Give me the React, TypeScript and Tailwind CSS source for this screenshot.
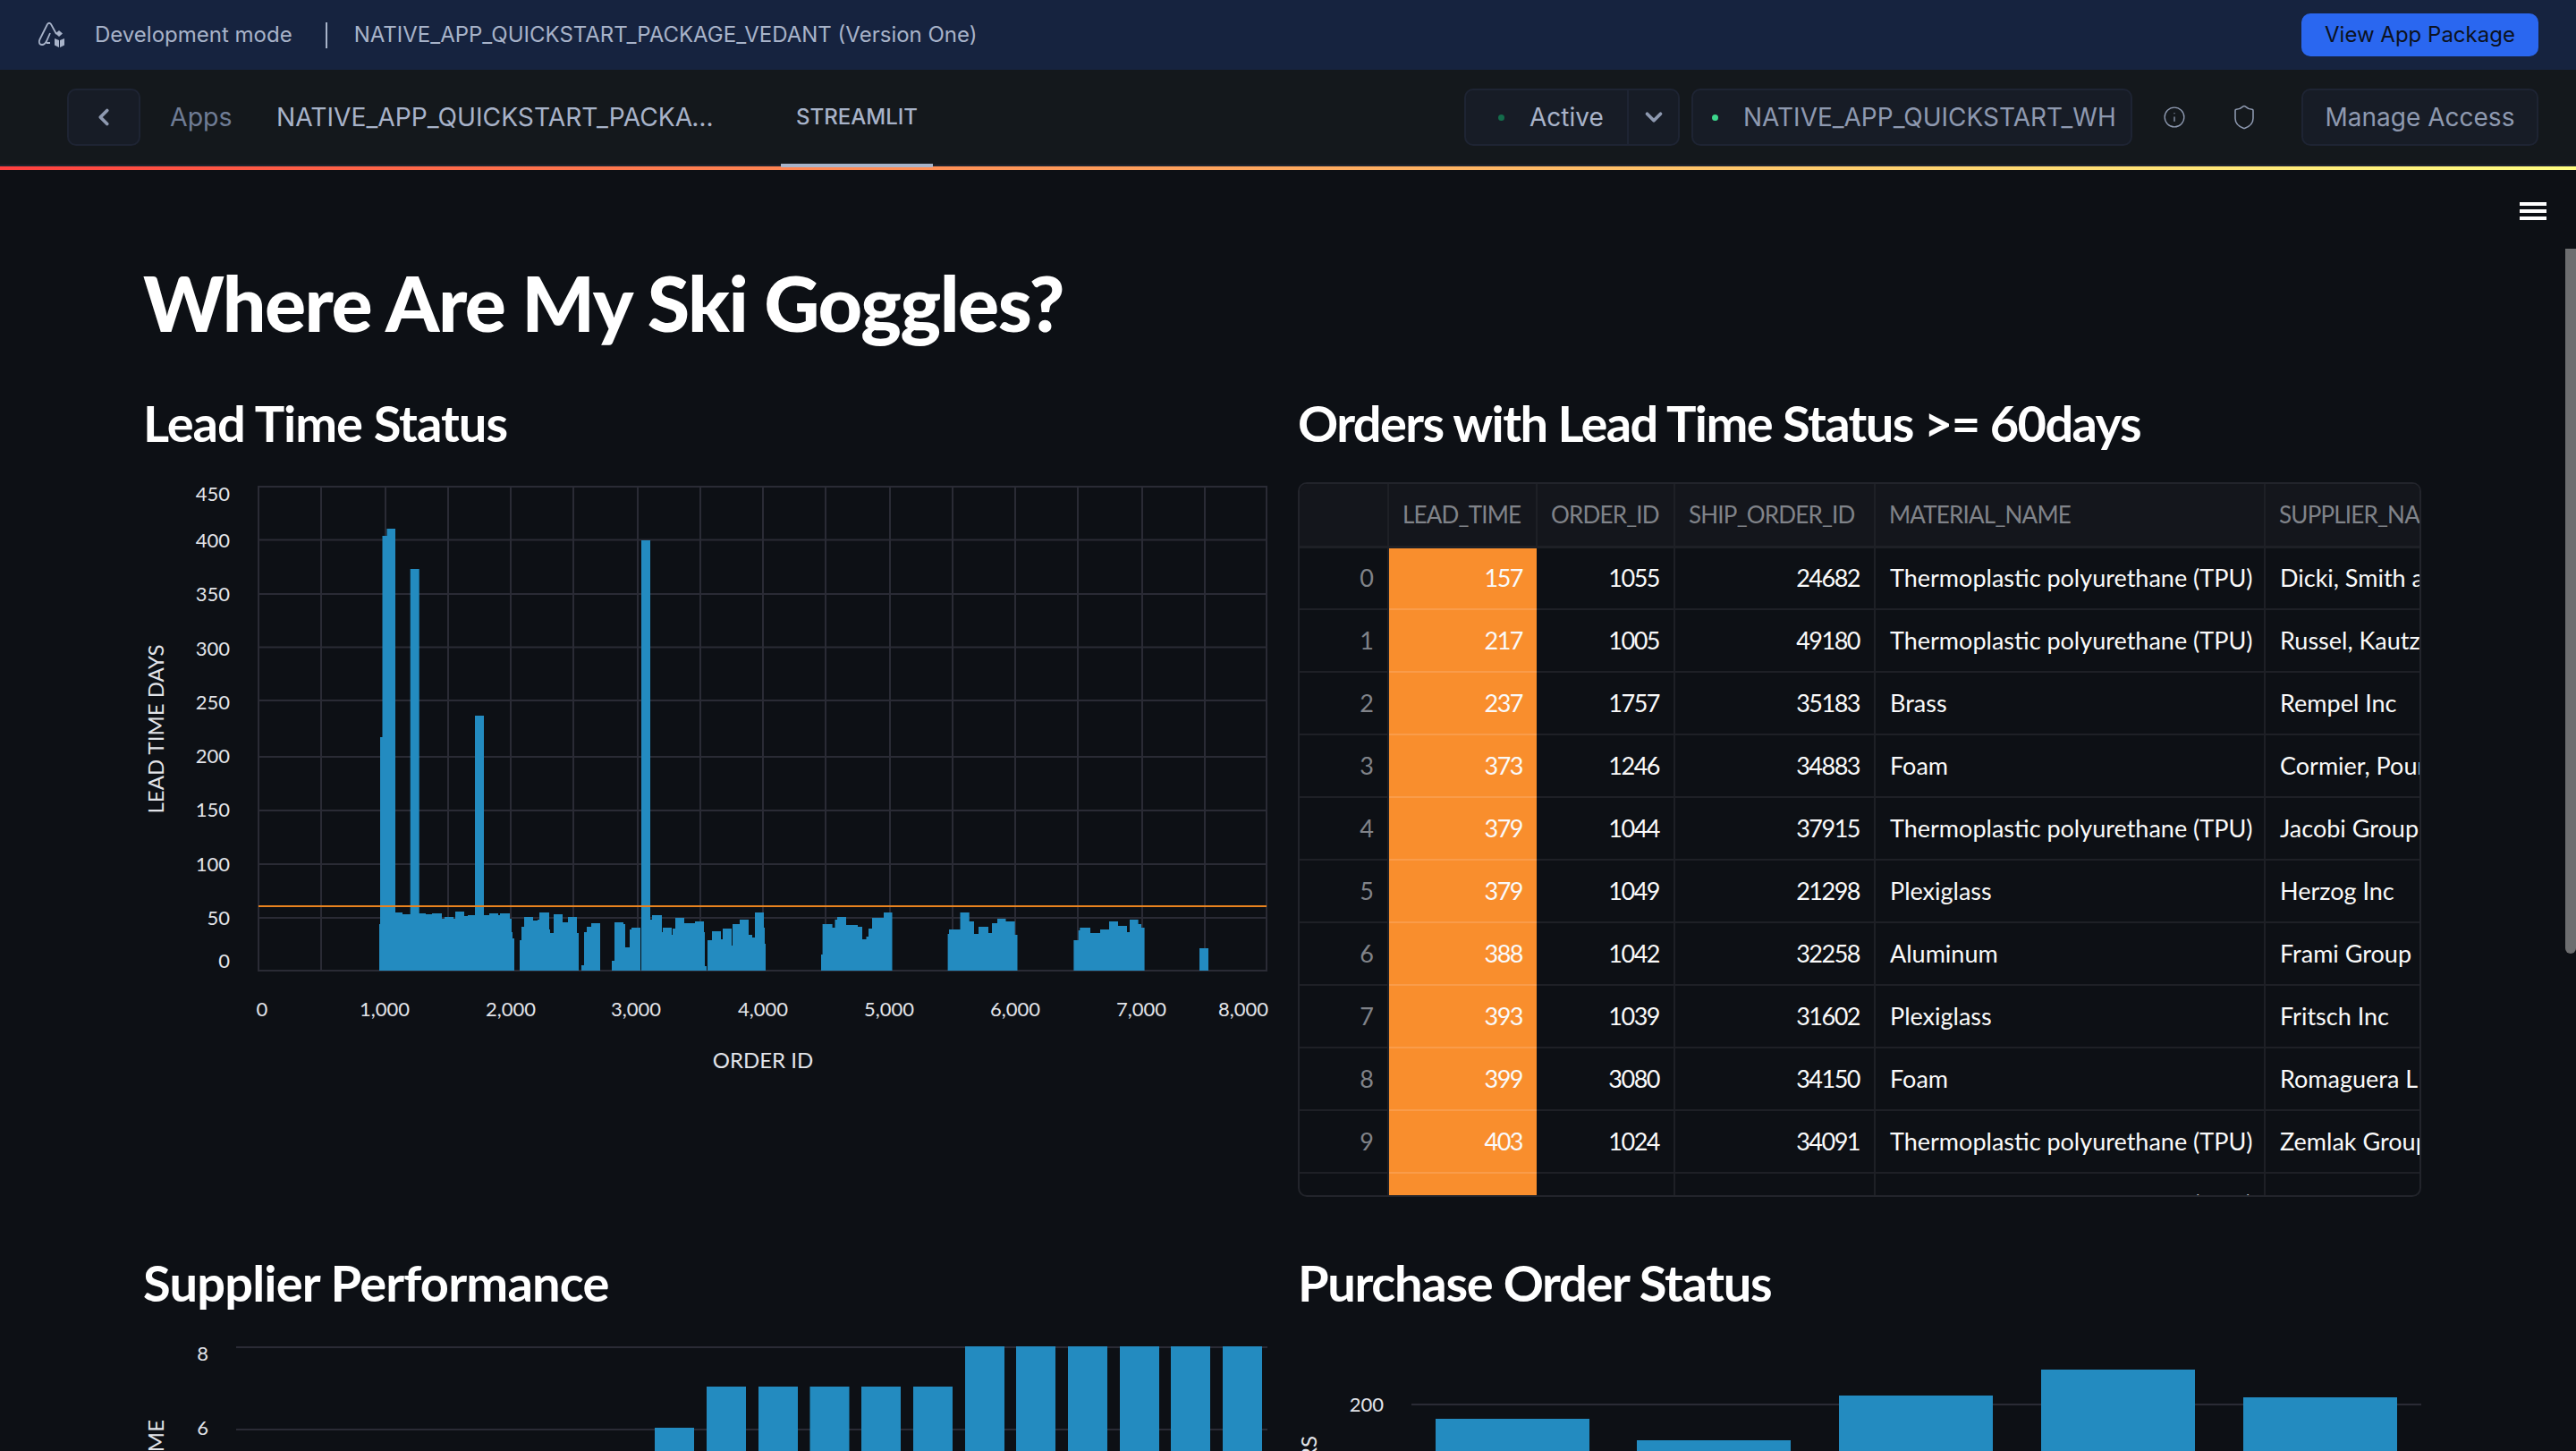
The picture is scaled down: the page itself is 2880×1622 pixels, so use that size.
import { ChevronDown, ChevronLeft, Info, Shield } from 'lucide-react';

const source = "font-['Lato',sans-serif]";
const inter = "font-['Inter',sans-serif]";

// each group: [x, top] steps, then the x where the group ends
const groups: { steps: number[][]; end: number }[] = [
	{
		steps: [[424, 1033], [425, 824], [427.5, 599], [432.5, 591], [442, 1020], [450, 1022], [458.7, 636], [468.7, 1021], [476, 1022], [483, 1021], [494, 1027], [497, 1025], [507, 1027], [509, 1019], [519, 1024], [523, 1023], [531, 800], [541, 1023], [547, 1021], [557, 1023], [559, 1021], [570, 1027], [572, 1042], [573, 1049]],
		end: 575,
	},
	{
		steps: [[581, 1051], [583, 1036], [586, 1025], [596, 1029], [601, 1028], [603, 1020], [614, 1039], [615, 1043], [619, 1022], [629, 1031], [635, 1025], [645, 1043]],
		end: 647,
	},
	{ steps: [[650, 1079], [653, 1042], [656, 1036], [661, 1032]], end: 671 },
	{ steps: [[684, 1074], [687, 1031], [697, 1033], [699, 1059], [704, 1039], [706, 1037]], end: 716 },
	{
		steps: [[717, 604], [727, 1028], [729, 1023], [740, 1042], [741, 1037], [751, 1045], [752, 1038], [755, 1026], [765, 1032], [777, 1030], [787, 1042], [788, 1080]],
		end: 790,
	},
	{
		steps: [[791, 1051], [796, 1041], [806, 1050], [808, 1038], [818, 1057], [819, 1033], [827, 1028], [837, 1045], [841, 1048], [844, 1020], [854, 1037], [855, 1055]],
		end: 856,
	},
	{
		steps: [[918, 1067], [919.6, 1033], [930.6, 1037], [933.5, 1028], [936, 1025], [946, 1034], [959, 1036], [964, 1050], [968.5, 1047], [971, 1038], [975, 1026], [988, 1020]],
		end: 997.5,
	},
	{
		steps: [[1059.6, 1044], [1061, 1039], [1073.5, 1020], [1083.7, 1030], [1089, 1044], [1094, 1036], [1105, 1043], [1109, 1032], [1115, 1027], [1124.5, 1030], [1134.7, 1045]],
		end: 1137.5,
	},
	{
		steps: [[1200.4, 1051], [1205.7, 1040], [1207.3, 1037], [1219, 1043], [1230, 1039], [1240, 1030], [1250, 1035], [1260, 1042], [1263, 1028], [1272.6, 1033], [1276, 1037]],
		end: 1279.6,
	},
	{ steps: [[1341, 1060]], end: 1351 },
];

const barPath = groups
	.map((g) => {
		const body = g.steps.map(([x, top]) => `H${x}V${top}`).join('');
		return `M${g.steps[0][0]} 1085${body}H${g.end}V1085Z`;
	})
	.join('');

const yGrid = [603.5, 664, 723.6, 783, 846, 906, 966, 1026];
const xGrid = [359, 431, 501, 571, 641, 713, 783, 853, 923, 995, 1065, 1135, 1205, 1277, 1347];
const yLabels = [
	['450', 552],
	['400', 604],
	['350', 664],
	['300', 725],
	['250', 785],
	['200', 845],
	['150', 905],
	['100', 966],
	['50', 1026],
	['0', 1074],
] as const;
const xLabels = [
	['0', 293],
	['1,000', 430],
	['2,000', 571],
	['3,000', 711],
	['4,000', 853],
	['5,000', 994],
	['6,000', 1135],
	['7,000', 1276],
	['8,000', 1390],
] as const;

const rows = [
	[157, 1055, 24682, 'Thermoplastic polyurethane (TPU)', 'Dicki, Smith and Sons'],
	[217, 1005, 49180, 'Thermoplastic polyurethane (TPU)', 'Russel, Kautzer and Co'],
	[237, 1757, 35183, 'Brass', 'Rempel Inc'],
	[373, 1246, 34883, 'Foam', 'Cormier, Pouros and Co'],
	[379, 1044, 37915, 'Thermoplastic polyurethane (TPU)', 'Jacobi Group'],
	[379, 1049, 21298, 'Plexiglass', 'Herzog Inc'],
	[388, 1042, 32258, 'Aluminum', 'Frami Group'],
	[393, 1039, 31602, 'Plexiglass', 'Fritsch Inc'],
	[399, 3080, 34150, 'Foam', 'Romaguera LLC'],
	[403, 1024, 34091, 'Thermoplastic polyurethane (TPU)', 'Zemlak Group'],
	[411, 1022, 30519, 'Thermoplastic polyurethane (TPU)', 'Dare Hills'],
] as const;

const headers = ['LEAD_TIME', 'ORDER_ID', 'SHIP_ORDER_ID', 'MATERIAL_NAME', 'SUPPLIER_NAME'];

function Logo() {
	return (
		<svg width="36" height="30" viewBox="0 0 36 30" fill="none" stroke="#a8b3c9" strokeWidth="1.8">
			<path d="M2 21 L11 3 Q13 0.5 15 3 L21 14 M2 21 Q1 26 5 26 Q8 26 10 22 L14 13 M14 24 H10" />
			<path d="M24 10 l4 3.5 -4 3.5 -4 -3.5z" fill="#a8b3c9" stroke="none" />
			<path d="M19 19 l5 2 v8 l-5 -2.5z M30 19 l-5 2 v8 l5 -2.5z" fill="#a8b3c9" stroke="none" />
		</svg>
	);
}

function LeadTimeChart() {
	return (
		<svg className={`block w-[1258px] h-[680px] ${source}`} viewBox="160 530 1258 680">
			<g stroke="#2a2b35" strokeWidth="2">
				<rect x="289" y="544" width="1127" height="541" fill="none" />
				{yGrid.map((y) => (
					<line key={y} x1="289" x2="1416" y1={y} y2={y} />
				))}
				{xGrid.map((x) => (
					<line key={x} x1={x} x2={x} y1="544" y2="1085" />
				))}
			</g>
			<path d={barPath} fill="#238bc0" />
			<line x1="289" x2="1416" y1="1013" y2="1013" stroke="#e8831f" strokeWidth="2" />
			<g fill="#e2e4e9" fontSize="22">
				{yLabels.map(([t, y]) => (
					<text key={t} x="257" y={y + 8} textAnchor="end">{t}</text>
				))}
				{xLabels.map(([t, x]) => (
					<text key={t} x={x} y="1136" textAnchor="middle">{t}</text>
				))}
			</g>
			<g fill="#e2e4e9" fontSize="24">
				<text x="853" y="1194" textAnchor="middle">ORDER ID</text>
				<text transform="translate(183 815) rotate(-90)" textAnchor="middle">LEAD TIME DAYS</text>
			</g>
		</svg>
	);
}

function SupplierChart() {
	const bars = [
		[732, 1596],
		[790, 1550],
		[848, 1550],
		[905.5, 1550],
		[963, 1550],
		[1021, 1550],
		[1079, 1505],
		[1136, 1505],
		[1194, 1505],
		[1252, 1505],
		[1309, 1505],
		[1367, 1505],
	];
	return (
		<svg className={`block w-[1258px] h-[152px] ${source}`} viewBox="160 1470 1258 152">
			<g stroke="#2a2b35" strokeWidth="2">
				<line x1="264" x2="1417" y1="1506" y2="1506" />
				<line x1="264" x2="1417" y1="1598" y2="1598" />
			</g>
			{bars.map(([x, top]) => (
				<rect key={x} x={x} y={top} width="44" height={1622 - top} fill="#238bc0" />
			))}
			<g fill="#e2e4e9" fontSize="22">
				<text x="233" y="1521" textAnchor="end">8</text>
				<text x="233" y="1604" textAnchor="end">6</text>
			</g>
			<text transform="translate(183 1587) rotate(-90)" textAnchor="end" fontSize="24" fill="#e2e4e9">LEAD TIME</text>
		</svg>
	);
}

function StatusChart() {
	const bars = [
		[1605, 1586],
		[1830, 1610],
		[2056, 1560],
		[2282, 1531],
		[2508, 1562],
	];
	return (
		<svg className={`block w-[1256px] h-[152px] ${source}`} viewBox="1451 1470 1256 152">
			<line x1="1578" x2="2707" y1="1570" y2="1570" stroke="#2a2b35" strokeWidth="2" />
			{bars.map(([x, top]) => (
				<rect key={x} x={x} y={top} width="172" height={1622 - top} fill="#238bc0" />
			))}
			<text x="1547" y="1578" textAnchor="end" fontSize="22" fill="#e2e4e9">200</text>
			<text transform="translate(1472 1605) rotate(-90)" textAnchor="end" fontSize="24" fill="#e2e4e9">ORDERS</text>
		</svg>
	);
}

function OrdersTable() {
	return (
		<div className={`mt-[32px] w-[1256px] h-[799px] overflow-hidden rounded-[10px] border-2 border-[#22242b] ${source}`}>
			<table className="table-fixed border-collapse w-[1398px]">
				<colgroup>
					<col className="w-[99px]" />
					<col className="w-[166px]" />
					<col className="w-[154px]" />
					<col className="w-[224px]" />
					<col className="w-[436px]" />
					<col className="w-[319px]" />
				</colgroup>
				<thead>
					<tr className="h-[70px] bg-[#14161c] border-b-[3px] border-[#1e2026]">
						<th className="border-r-2 border-[#1e2026]" />
						{headers.map((h) => (
							<th key={h} className="pl-[15px] text-left text-[26px] tracking-[-0.8px] font-normal text-[#808389] border-r-2 border-[#1e2026] whitespace-nowrap overflow-hidden">
								{h}
							</th>
						))}
					</tr>
				</thead>
				<tbody>
					{rows.map((r, i) => (
						<tr key={i} className="h-[70px] text-[27px] text-[#fafafa] whitespace-nowrap">
							<td className="pr-[15px] text-right text-[#808389] border-b-2 border-r-2 border-[#1e2026]">{i}</td>
							<td className="pr-[16px] text-right tracking-[-1.5px] bg-[#f98e2d] border-b-2 border-[#fa9c4a]">{r[0]}</td>
							<td className="pr-[16px] text-right tracking-[-1.5px] border-b-2 border-r-2 border-[#1e2026]">{r[1]}</td>
							<td className="pr-[16px] text-right tracking-[-1.5px] border-b-2 border-r-2 border-[#1e2026]">{r[2]}</td>
							<td className="pl-[16px] border-b-2 border-r-2 border-[#1e2026]">{r[3]}</td>
							<td className="pl-[16px] border-b-2 border-r-2 border-[#1e2026] overflow-hidden">{r[4]}</td>
						</tr>
					))}
				</tbody>
			</table>
		</div>
	);
}

export default function App() {
	return (
		<div className="relative w-[2880px] h-[1622px] overflow-hidden bg-[#0d1015]">
			<header className={`flex items-center h-[78px] pl-[42px] pr-[42px] bg-[#16233f] text-[#a8b3c9] text-[24px] ${inter}`}>
				<Logo />
				<span className="ml-[28px]">Development mode</span>
				<span className="ml-[37px] w-[2px] h-[29px] bg-[#a8b3c9]" />
				<span className="ml-[30px]">NATIVE_APP_QUICKSTART_PACKAGE_VEDANT (Version One)</span>
				<button className="ml-auto w-[265px] h-[48px] rounded-[10px] bg-[#2a67f0] text-[#0c1220] text-[24px]">
					View App Package
				</button>
			</header>

			<nav className={`flex items-center h-[108px] pl-[75px] pr-[42px] bg-[#14181c] border-b-2 border-[#20232e] text-[28px] ${inter}`}>
				<button className="flex items-center justify-center w-[82px] h-[64px] rounded-[10px] border-2 border-[#1e2433] bg-[#171c26]">
					<ChevronLeft size={30} strokeWidth={3} className="text-[#8e99b0]" />
				</button>
				<span className="ml-[33px] w-[70px] text-[28.5px] text-[#6f7c95]">Apps</span>
				<span className="ml-[49px] w-[498px] truncate text-[28.2px] text-[#a8b3c9]">NATIVE_APP_QUICKSTART_PACKAGE_VEDANT</span>
				<div className="relative ml-[66px] flex items-center justify-center w-[170px] h-[106px] text-[24px] font-medium text-[#a8b3c9]">
					STREAMLIT
					<span className="absolute -bottom-[3px] left-0 right-0 h-[4px] bg-[#a8b3c9]" />
				</div>

				<div className="ml-auto flex items-center w-[241px] h-[64px] rounded-[10px] border-2 border-[#1e2433] bg-[#171c26]">
					<span className="ml-[36px] w-[7px] h-[7px] rounded-full bg-[#146c4b]" />
					<span className="ml-[28px] text-[#a8b3c9]">Active</span>
					<span className="ml-auto w-[2px] h-full bg-[#1e2433]" />
					<span className="flex justify-center w-[55px]">
						<ChevronDown size={30} strokeWidth={3} className="text-[#8e99b0]" />
					</span>
				</div>
				<div className="ml-[13px] flex items-center w-[493px] h-[64px] rounded-[10px] border-2 border-[#1e2433] bg-[#171c26]">
					<span className="ml-[21px] w-[7px] h-[7px] rounded-full bg-[#3dd68c]" />
					<span className="ml-[28px] text-[#8e99b0]">NATIVE_APP_QUICKSTART_WH</span>
				</div>
				<Info size={26} strokeWidth={1.25} className="ml-[34px] text-[#8e99b0]" />
				<Shield size={30} strokeWidth={1.25} className="ml-[50px] text-[#8e99b0]" />
				<button className="ml-[49px] w-[265px] h-[64px] rounded-[10px] border-2 border-[#1e2433] bg-[#171c26] text-[#8e99b0]">
					Manage Access
				</button>
			</nav>

			<div className="h-[4px] bg-linear-to-r from-[#ff3f3f] to-[#fffd80]" />

			<main className={`pt-[95px] pl-[160px] text-white ${source}`}>
				<h1 className="text-[86px] leading-[106px] font-black tracking-[-1.5px]">Where Are My Ski Goggles?</h1>
				<div className="mt-[48px] grid grid-cols-[1258px_1256px] gap-x-[33px] gap-y-[62px]">
					<section>
						<h3 className="text-[56px] leading-[68px] font-bold tracking-[-1px] mb-[23px]">Lead Time Status</h3>
						<LeadTimeChart />
					</section>
					<section>
						<h3 className="text-[56px] leading-[68px] font-bold tracking-[-1.6px]">Orders with Lead Time Status &gt;= 60days</h3>
						<OrdersTable />
					</section>
					<section>
						<h3 className="text-[56px] leading-[68px] font-bold tracking-[-0.8px] mb-[2px]">Supplier Performance</h3>
						<SupplierChart />
					</section>
					<section>
						<h3 className="text-[56px] leading-[68px] font-bold tracking-[-1.3px] mb-[2px]">Purchase Order Status</h3>
						<StatusChart />
					</section>
				</div>
			</main>

			{/* overlays: app menu and the page scrollbar */}
			<div className="absolute top-[226px] right-[33px] flex flex-col gap-[4px] w-[30px]">
				<span className="h-[4px] bg-white" />
				<span className="h-[4px] bg-white" />
				<span className="h-[4px] bg-white" />
			</div>
			<div className="absolute top-[278px] right-0 w-[12px] h-[788px] rounded-b-[6px] bg-[#6d6e70]" />
		</div>
	);
}
